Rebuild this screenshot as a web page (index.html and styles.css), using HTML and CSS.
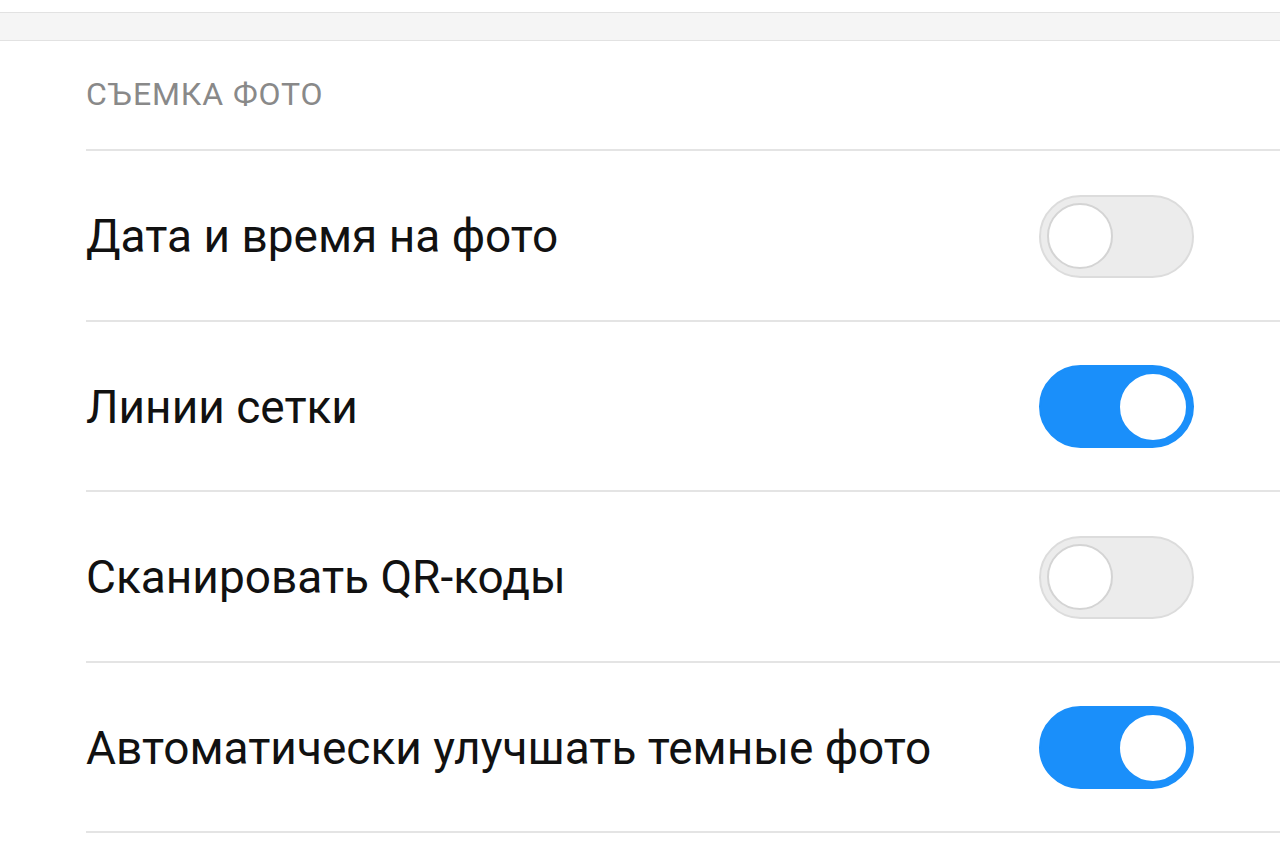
FILE: index.html
```html
<!DOCTYPE html>
<html lang="ru">
<head>
    <meta charset="UTF-8">
    <meta name="viewport" content="width=device-width, initial-scale=1.0">
    <title>Настройки камеры</title>
    <link rel="stylesheet" href="styles.css">
</head>
<body>
    <div class="top-strip"></div>
    <div class="group-gap"></div>

    <section class="settings-group">
        <h2 class="group-title">СЪЕМКА ФОТО</h2>

        <div class="setting-row">
            <span class="setting-label">Дата и время на фото</span>
            <span class="switch"><span class="knob"></span></span>
        </div>

        <div class="setting-row">
            <span class="setting-label">Линии сетки</span>
            <span class="switch on"><span class="knob"></span></span>
        </div>

        <div class="setting-row">
            <span class="setting-label">Сканировать QR-коды</span>
            <span class="switch"><span class="knob"></span></span>
        </div>

        <div class="setting-row">
            <span class="setting-label">Автоматически улучшать темные фото</span>
            <span class="switch on"><span class="knob"></span></span>
        </div>
    </section>
</body>
</html>
```

FILE: styles.css
```css
* {
    margin: 0;
    padding: 0;
    box-sizing: border-box;
}

body {
    font-family: Roboto, 'Noto Sans', sans-serif;
    background: #fff;
    color: #111;
    width: 1280px;
    overflow: hidden;
}

.top-strip {
    height: 12px;
    background: #fff;
}

.group-gap {
    height: 29px;
    background: #f5f5f5;
    border-top: 1px solid #e2e2e2;
    border-bottom: 1px solid #e2e2e2;
}

.settings-group {
    padding-left: 86px;
}

.group-title {
    height: 110px;
    display: flex;
    align-items: center;
    font-size: 32px;
    letter-spacing: 0.9px;
    font-weight: 400;
    color: #898989;
    padding-bottom: 2px;
    border-bottom: 2px solid #e4e4e4;
}

.setting-row {
    height: 170.5px;
    display: flex;
    align-items: center;
    justify-content: space-between;
    padding-right: 86px;
    padding-top: 2px;
    border-bottom: 2px solid #e4e4e4;
}

.setting-label {
    font-size: 46px;
    color: #111;
}

/* переключатели */
.switch {
    width: 155px;
    height: 83px;
    border-radius: 42px;
    background: #ececec;
    border: 2px solid #dcdcdc;
    display: flex;
    align-items: center;
    padding: 0 6px;
}

.switch .knob {
    width: 66px;
    height: 66px;
    border-radius: 50%;
    background: #fff;
    border: 2px solid #d4d4d4;
}

.switch.on {
    background: #1a8ffa;
    border-color: #1a8ffa;
    justify-content: flex-end;
}

.switch.on .knob {
    border-color: #fff;
}
```
